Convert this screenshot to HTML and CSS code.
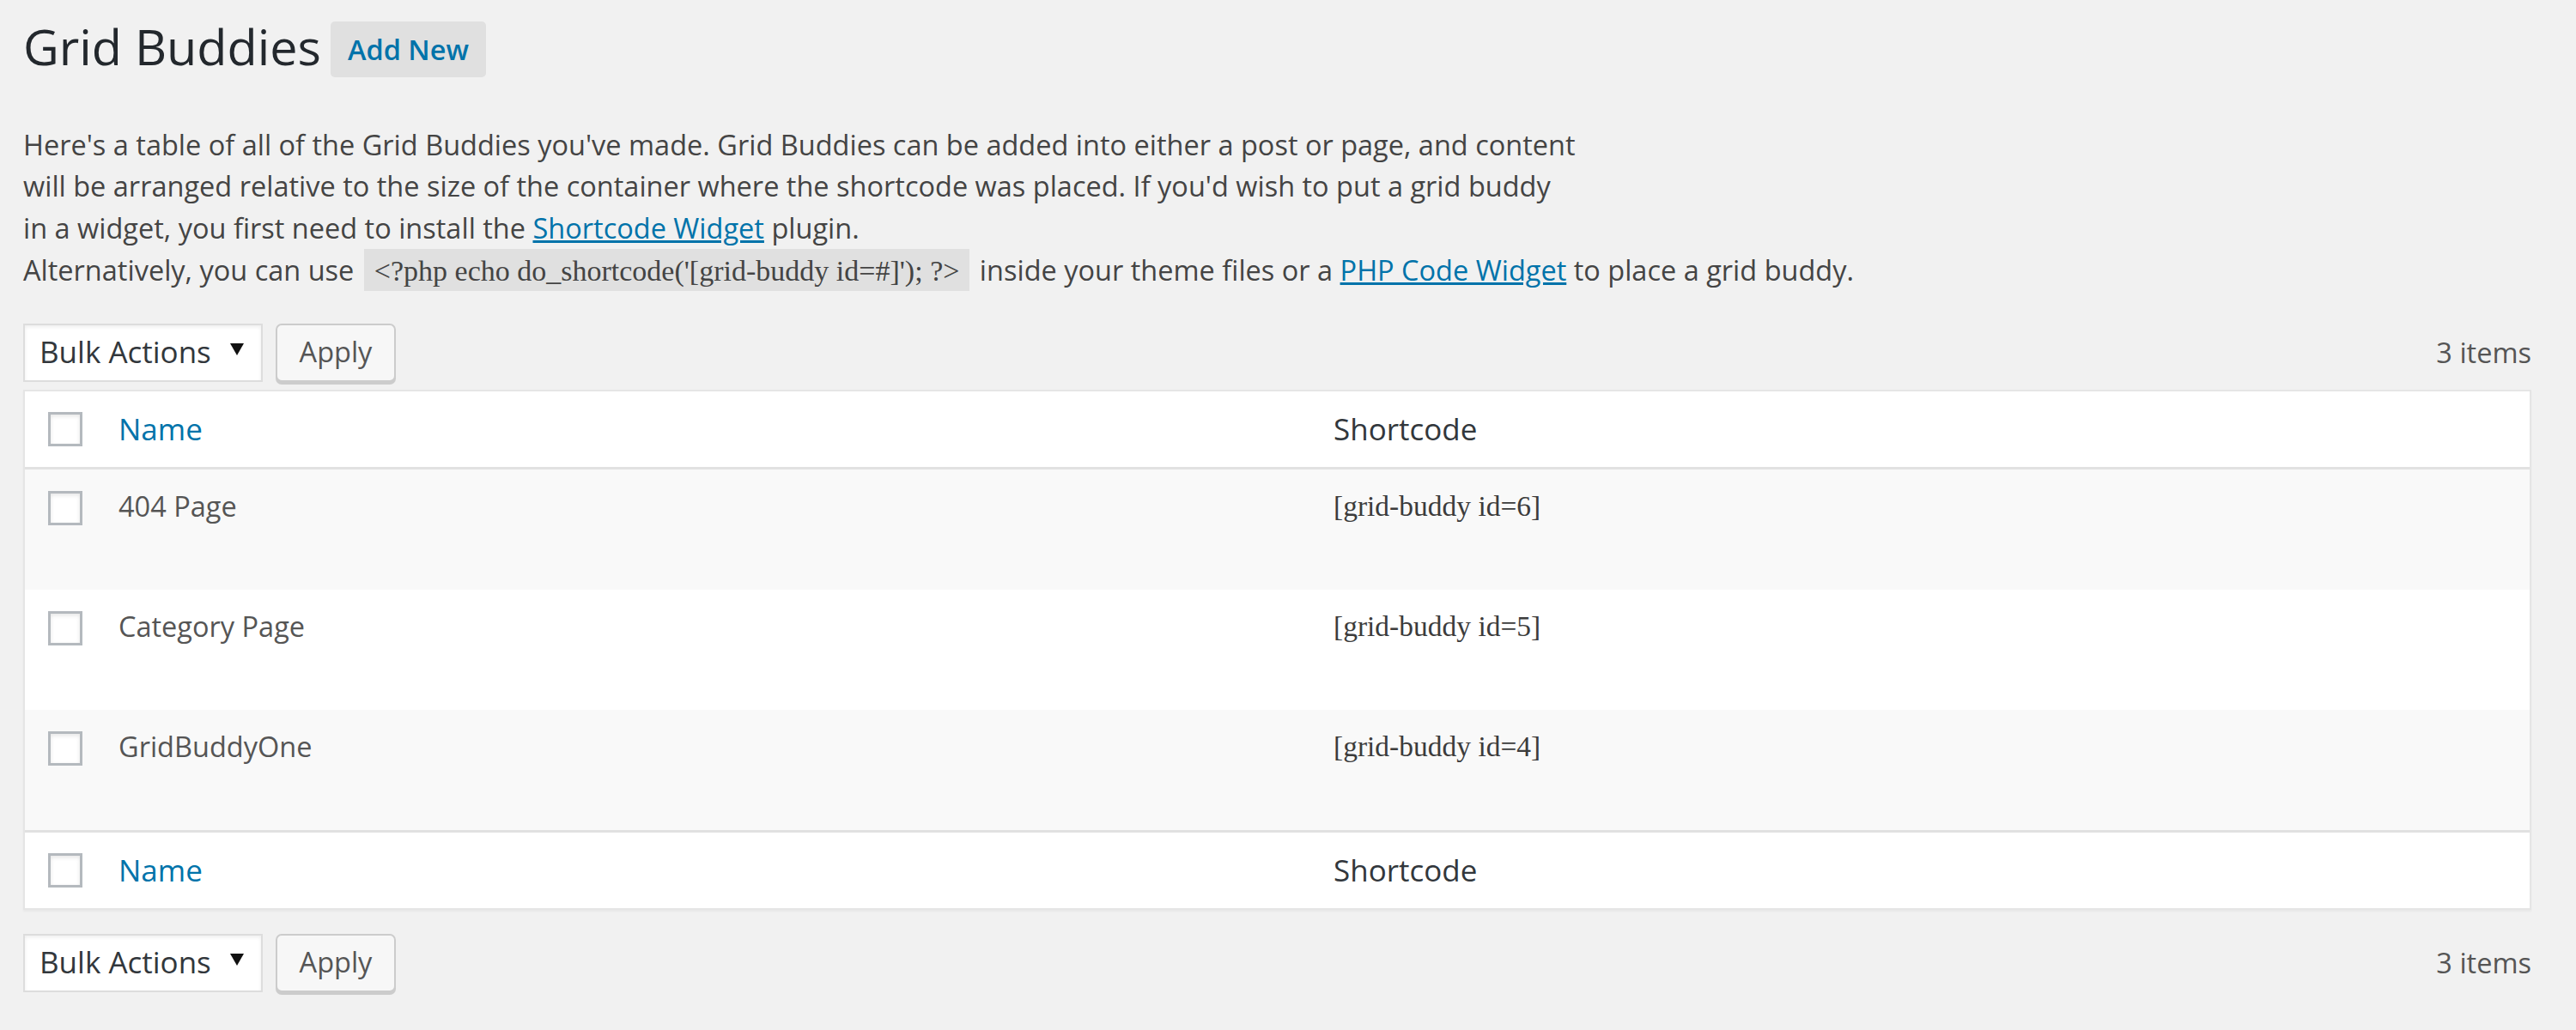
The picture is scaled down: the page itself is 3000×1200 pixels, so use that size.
FILE: index.html
```html
<!DOCTYPE html>
<html>
<head>
<meta charset="utf-8">
<title>Grid Buddies</title>
<link rel="stylesheet" href="styles.css">
</head>
<body>
<div class="wrap">
  <div class="heading">
    <h1 class="title">Grid Buddies</h1>
    <a class="add-new" href="#">Add New</a>
  </div>
  <p class="intro">Here's a table of all of the Grid Buddies you've made. Grid Buddies can be added into either a post or page, and content<br>will be arranged relative to the size of the container where the shortcode was placed. If you'd wish to put a grid buddy<br>in a widget, you first need to install the <a href="#">Shortcode Widget</a> plugin.<br>Alternatively, you can use <code>&lt;?php echo do_shortcode('[grid-buddy id=#]'); ?&gt;</code> inside your theme files or a <a href="#">PHP Code Widget</a> to place a grid buddy.</p>

  <div class="tablenav top">
    <div class="actions">
      <div class="select"><span>Bulk Actions</span><svg class="arrow" width="16" height="14" viewBox="0 0 16 14"><polygon points="0,0 16,0 8,14" fill="#111"/></svg></div>
      <button class="button">Apply</button>
    </div>
    <span class="count">3 items</span>
  </div>

  <table class="list">
    <colgroup><col class="c-check"><col class="c-name"><col class="c-code"></colgroup>
    <thead>
      <tr><td class="check"><span class="cb"></span></td><th><a href="#">Name</a></th><th>Shortcode</th></tr>
    </thead>
    <tbody>
      <tr class="alt"><td class="check"><span class="cb"></span></td><td class="name">404 Page</td><td class="code">[grid-buddy id=6]</td></tr>
      <tr><td class="check"><span class="cb"></span></td><td class="name">Category Page</td><td class="code">[grid-buddy id=5]</td></tr>
      <tr class="alt"><td class="check"><span class="cb"></span></td><td class="name">GridBuddyOne</td><td class="code">[grid-buddy id=4]</td></tr>
    </tbody>
    <tfoot>
      <tr><td class="check"><span class="cb"></span></td><th><a href="#">Name</a></th><th>Shortcode</th></tr>
    </tfoot>
  </table>

  <div class="tablenav bottom">
    <div class="actions">
      <div class="select"><span>Bulk Actions</span><svg class="arrow" width="16" height="14" viewBox="0 0 16 14"><polygon points="0,0 16,0 8,14" fill="#111"/></svg></div>
      <button class="button">Apply</button>
    </div>
    <span class="count">3 items</span>
  </div>
</div>
</body>
</html>
```

FILE: styles.css
```css
html, body {
  margin: 0;
  padding: 0;
  background: #f1f1f1;
}
body {
  font-family: "Open Sans", "Liberation Sans", sans-serif;
  color: #444;
  font-size: 32.5px;
}
.wrap {
  margin: 0 52px 0 27px;
  padding-bottom: 40px;
}
.heading {
  display: flex;
  align-items: flex-start;
  padding-top: 18px;
}
.title {
  margin: 0;
  font-size: 57.5px;
  line-height: 72.5px;
  font-weight: 400;
  color: #23282d;
}
.add-new {
  margin-left: 11px;
  margin-top: 7px;
  padding: 10px 20px;
  background: #e0e0e0;
  border-radius: 5px;
  color: #0073aa;
  font-weight: 600;
  font-size: 32.5px;
  line-height: 45px;
  text-decoration: none;
}
.intro {
  margin: 54px 0 0;
  font-size: 32.5px;
  line-height: 48.75px;
  white-space: nowrap;
}
.intro a {
  color: #0073aa;
  text-decoration: underline;
}
.intro code {
  font-family: "Liberation Serif", "Times New Roman", serif;
  font-size: 34px;
  background: rgba(0,0,0,0.07);
  padding: 7px 12px 5px;
  margin: 0 3px;
  color: #444;
}
.tablenav {
  display: flex;
  align-items: center;
  justify-content: space-between;
}
.tablenav.top {
  margin-top: 36px;
  margin-bottom: 9px;
}
.tablenav.bottom {
  margin-top: 28px;
}
.actions {
  display: flex;
  align-items: center;
  gap: 15px;
}
.select {
  box-sizing: border-box;
  width: 279px;
  height: 68px;
  background: #fff;
  border: 2px solid #ddd;
  box-shadow: inset 0 2px 4px rgba(0,0,0,0.07);
  display: flex;
  align-items: center;
  justify-content: space-between;
  padding: 0 20px 0 17px;
  color: #32373c;
  font-size: 35px;
}
.select span {
  line-height: 1;
  padding-bottom: 2px;
}
.arrow {
  margin-top: -8px;
}
.button {
  box-sizing: border-box;
  height: 68px;
  width: 140px;
  padding: 0 0 3px;
  font-family: "Open Sans", "Liberation Sans", sans-serif;
  font-size: 32.5px;
  color: #555;
  background: #f7f7f7;
  border: 2px solid #ccc;
  border-radius: 7px;
  box-shadow: 0 3px 0 #ccc;
}
.count {
  color: #555;
  font-size: 32.5px;
}
.list {
  width: 100%;
  table-layout: fixed;
  border-spacing: 0;
  border: 2px solid #e5e5e5;
  background: #fff;
  box-shadow: 0 2px 2px rgba(0,0,0,0.04);
}
.c-check { width: 84px; }
.c-name { width: 1415px; }
.list thead th, .list thead td,
.list tfoot th, .list tfoot td {
  height: 88px;
  padding: 0 25px;
  vertical-align: middle;
  text-align: left;
  font-weight: 400;
  font-size: 35px;
  line-height: 49px;
  color: #32373c;
}
.list thead th, .list thead td {
  border-bottom: 3px solid #e1e1e1;
}
.list tfoot th, .list tfoot td {
  border-top: 3px solid #e1e1e1;
}
.list th a {
  color: #0073aa;
  text-decoration: none;
}
.list td.check {
  padding: 0 0 0 27px;
}
.list tbody td {
  height: 140px;
  box-sizing: border-box;
  vertical-align: top;
  padding: 19px 25px 0;
  font-size: 32.5px;
  line-height: 48.75px;
  color: #555;
}
.list tbody td.check {
  padding: 25px 0 0 27px;
}
.list tbody tr.alt td {
  background: #f9f9f9;
}
.list td.code {
  font-family: "Liberation Serif", "Times New Roman", serif;
  font-size: 33.5px;
  color: #3c3c3c;
}
.cb {
  display: block;
  box-sizing: border-box;
  width: 40px;
  height: 40px;
  border: 3px solid #b4b9be;
  background: #fff;
  box-shadow: inset 0 2px 5px rgba(0,0,0,0.1);
}
```
